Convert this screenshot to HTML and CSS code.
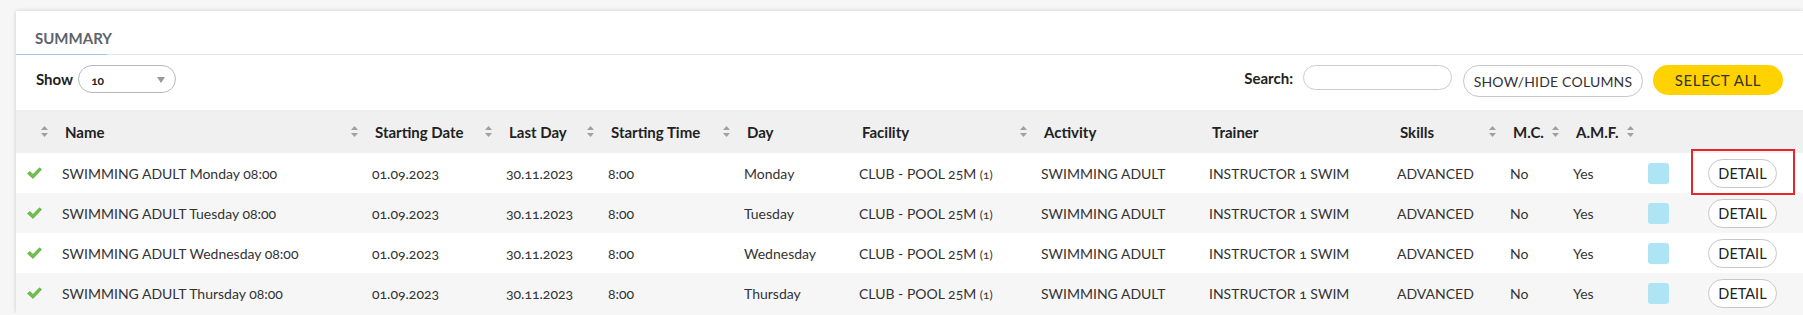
FILE: index.html
```html
<!DOCTYPE html>
<html lang="en">
<head>
    <meta charset="UTF-8">
    <meta name="viewport" content="width=device-width, initial-scale=1.0">
    <title>Summary</title>
    <link rel="stylesheet" href="styles.css">
</head>
<body>
    <div class="panel">
        <div class="tabs">
            <div class="tab active">SUMMARY</div>
        </div>

        <div class="toolbar">
            <label class="length">Show
                <span class="select">10
                    <svg class="caret" width="8" height="6" viewBox="0 0 8 6"><path d="M0 0h8L4 6z" fill="#999"/></svg>
                </span>
            </label>
            <div class="tools">
                <label class="search">Search: <input type="text"></label>
                <button class="btn btn-columns">SHOW/HIDE COLUMNS</button>
                <button class="btn btn-yellow">SELECT ALL</button>
            </div>
        </div>

        <table class="grid">
            <colgroup>
                <col style="width:40px">
                <col style="width:310px">
                <col style="width:134px">
                <col style="width:102px">
                <col style="width:136px">
                <col style="width:115px">
                <col style="width:182px">
                <col style="width:168px">
                <col style="width:188px">
                <col style="width:113px">
                <col style="width:63px">
                <col style="width:75px">
                <col style="width:49px">
                <col>
            </colgroup>
            <thead>
                <tr>
                    <th><span class="th-in"><span></span><svg class="sort" width="7" height="11" viewBox="0 0 7 11"><path d="M3.5 0L7 4H0zM3.5 11L0 7h7z" fill="#a0a0a0"/></svg></span></th>
                    <th><span class="th-in">Name<svg class="sort" width="7" height="11" viewBox="0 0 7 11"><path d="M3.5 0L7 4H0zM3.5 11L0 7h7z" fill="#a0a0a0"/></svg></span></th>
                    <th><span class="th-in">Starting Date<svg class="sort" width="7" height="11" viewBox="0 0 7 11"><path d="M3.5 0L7 4H0zM3.5 11L0 7h7z" fill="#a0a0a0"/></svg></span></th>
                    <th><span class="th-in">Last Day<svg class="sort" width="7" height="11" viewBox="0 0 7 11"><path d="M3.5 0L7 4H0zM3.5 11L0 7h7z" fill="#a0a0a0"/></svg></span></th>
                    <th><span class="th-in">Starting Time<svg class="sort" width="7" height="11" viewBox="0 0 7 11"><path d="M3.5 0L7 4H0zM3.5 11L0 7h7z" fill="#a0a0a0"/></svg></span></th>
                    <th><span class="th-in">Day</span></th>
                    <th><span class="th-in">Facility<svg class="sort" width="7" height="11" viewBox="0 0 7 11"><path d="M3.5 0L7 4H0zM3.5 11L0 7h7z" fill="#a0a0a0"/></svg></span></th>
                    <th><span class="th-in">Activity</span></th>
                    <th><span class="th-in">Trainer</span></th>
                    <th><span class="th-in">Skills<svg class="sort" width="7" height="11" viewBox="0 0 7 11"><path d="M3.5 0L7 4H0zM3.5 11L0 7h7z" fill="#a0a0a0"/></svg></span></th>
                    <th><span class="th-in">M.C.<svg class="sort" width="7" height="11" viewBox="0 0 7 11"><path d="M3.5 0L7 4H0zM3.5 11L0 7h7z" fill="#a0a0a0"/></svg></span></th>
                    <th><span class="th-in">A.M.F.<svg class="sort" width="7" height="11" viewBox="0 0 7 11"><path d="M3.5 0L7 4H0zM3.5 11L0 7h7z" fill="#a0a0a0"/></svg></span></th>
                    <th></th>
                    <th></th>
                </tr>
            </thead>
            <tbody>
                <tr>
                    <td class="check"><svg width="15" height="12" viewBox="0 0 15 12"><path d="M0.5 6.5L3 4.5L6 7.5L12.5 0.8L14.5 2.5L6 11.5z" fill="#6cc24a" stroke="#4a9e2c" stroke-width="0.6"/></svg></td>
                    <td>SWIMMING ADULT Monday 08:00</td>
                    <td>01.09.2023</td>
                    <td>30.11.2023</td>
                    <td>8:00</td>
                    <td>Monday</td>
                    <td>CLUB - POOL 25M <small>(1)</small></td>
                    <td>SWIMMING ADULT</td>
                    <td>INSTRUCTOR 1 SWIM</td>
                    <td>ADVANCED</td>
                    <td>No</td>
                    <td>Yes</td>
                    <td><span class="swatch"></span></td>
                    <td class="action"><span class="marked"><button class="btn-detail">DETAIL</button></span></td>
                </tr>
                <tr>
                    <td class="check"><svg width="15" height="12" viewBox="0 0 15 12"><path d="M0.5 6.5L3 4.5L6 7.5L12.5 0.8L14.5 2.5L6 11.5z" fill="#6cc24a" stroke="#4a9e2c" stroke-width="0.6"/></svg></td>
                    <td>SWIMMING ADULT Tuesday 08:00</td>
                    <td>01.09.2023</td>
                    <td>30.11.2023</td>
                    <td>8:00</td>
                    <td>Tuesday</td>
                    <td>CLUB - POOL 25M <small>(1)</small></td>
                    <td>SWIMMING ADULT</td>
                    <td>INSTRUCTOR 1 SWIM</td>
                    <td>ADVANCED</td>
                    <td>No</td>
                    <td>Yes</td>
                    <td><span class="swatch"></span></td>
                    <td class="action"><button class="btn-detail">DETAIL</button></td>
                </tr>
                <tr>
                    <td class="check"><svg width="15" height="12" viewBox="0 0 15 12"><path d="M0.5 6.5L3 4.5L6 7.5L12.5 0.8L14.5 2.5L6 11.5z" fill="#6cc24a" stroke="#4a9e2c" stroke-width="0.6"/></svg></td>
                    <td>SWIMMING ADULT Wednesday 08:00</td>
                    <td>01.09.2023</td>
                    <td>30.11.2023</td>
                    <td>8:00</td>
                    <td>Wednesday</td>
                    <td>CLUB - POOL 25M <small>(1)</small></td>
                    <td>SWIMMING ADULT</td>
                    <td>INSTRUCTOR 1 SWIM</td>
                    <td>ADVANCED</td>
                    <td>No</td>
                    <td>Yes</td>
                    <td><span class="swatch"></span></td>
                    <td class="action"><button class="btn-detail">DETAIL</button></td>
                </tr>
                <tr>
                    <td class="check"><svg width="15" height="12" viewBox="0 0 15 12"><path d="M0.5 6.5L3 4.5L6 7.5L12.5 0.8L14.5 2.5L6 11.5z" fill="#6cc24a" stroke="#4a9e2c" stroke-width="0.6"/></svg></td>
                    <td>SWIMMING ADULT Thursday 08:00</td>
                    <td>01.09.2023</td>
                    <td>30.11.2023</td>
                    <td>8:00</td>
                    <td>Thursday</td>
                    <td>CLUB - POOL 25M <small>(1)</small></td>
                    <td>SWIMMING ADULT</td>
                    <td>INSTRUCTOR 1 SWIM</td>
                    <td>ADVANCED</td>
                    <td>No</td>
                    <td>Yes</td>
                    <td><span class="swatch"></span></td>
                    <td class="action"><button class="btn-detail">DETAIL</button></td>
                </tr>
            </tbody>
        </table>
    </div>
</body>
</html>
```

FILE: styles.css
```css
*{
    margin: 0;
    padding: 0;
    box-sizing: border-box;
}
body{
    background-color: #f6f6f6;
    font-family: Lato, "Open Sans", sans-serif;
    color: #333;
    overflow: hidden;
}
.panel{
    margin: 11px 0 0 16px;
    background-color: #fff;
    box-shadow: 0 0 4px rgba(0, 0, 0, 0.18);
}
.tabs{
    height: 44px;
    border-bottom: 1px solid #e6e6e6;
}
.tab{
    width: 91px;
    height: 44px;
    padding: 18px 0 0 19px;
    line-height: 18px;
    font-size: 15px;
    font-weight: 700;
    color: #5d636b;
}
.tab.active{
    border-bottom: 1px solid #9cc6ea;
}

.toolbar{
    display: flex;
    justify-content: space-between;
    align-items: flex-start;
    height: 55px;
    padding: 10px 20px 0 20px;
}
.length{
    display: flex;
    align-items: center;
    gap: 5px;
    height: 28px;
    font-size: 15px;
    font-weight: 700;
    color: #222;
}
.select{
    display: flex;
    align-items: center;
    justify-content: space-between;
    width: 98px;
    height: 28px;
    padding: 2px 10px 0 12px;
    border: 1px solid #b8b8b8;
    border-radius: 14px;
    font-size: 12px;
    font-weight: 700;
    font-variant-numeric: oldstyle-nums;
}
.tools{
    display: flex;
    align-items: flex-start;
}
.search{
    display: flex;
    align-items: center;
    gap: 10px;
    height: 25px;
    margin-right: 11px;
    font-size: 15px;
    font-weight: 700;
    color: #222;
}
.search input{
    width: 149px;
    height: 25px;
    border: 1px solid #ccc;
    border-radius: 13px;
    outline: none;
}
.btn{
    height: 32px;
    padding: 0;
    border: 1px solid #c8c8c8;
    border-radius: 16px;
    background-color: #fff;
    font-family: Lato, sans-serif;
    font-size: 14px;
    color: #333;
    letter-spacing: 0.2px;
}
.btn-columns{
    width: 180px;
}
.btn-yellow{
    width: 130px;
    height: 30px;
    margin-left: 10px;
    border: none;
    background-color: #ffd200;
    font-size: 15px;
    letter-spacing: 0.6px;
}

.grid{
    width: 100%;
    border-collapse: collapse;
    table-layout: fixed;
}
.grid thead tr{
    background-color: #f0f0f0;
}
.grid th{
    height: 43px;
    padding: 0 8px 0 9px;
    text-align: left;
    font-size: 15px;
    font-weight: 700;
    color: #222;
    white-space: nowrap;
}
.th-in{
    display: flex;
    align-items: center;
    justify-content: space-between;
}
.sort{
    flex: none;
}
.grid td{
    height: 40px;
    padding: 0 6px;
    font-size: 14px;
    color: #333;
    white-space: nowrap;
    font-variant-numeric: oldstyle-nums;
}
.grid td small{
    font-size: 12px;
}
.grid tbody tr:nth-child(even){
    background-color: #f6f6f6;
}
.grid td.check{
    padding-left: 11px;
}
.grid td.check svg{
    display: block;
}
.swatch{
    display: block;
    width: 21px;
    height: 21px;
    border-radius: 3px;
    background-color: #aee4f4;
}
.grid td.action{
    padding-left: 17px;
}
.btn-detail{
    display: block;
    width: 69px;
    height: 29px;
    border: 1px solid #c8c8c8;
    border-radius: 15px;
    background-color: #fff;
    font-family: Lato, sans-serif;
    font-size: 14.5px;
    color: #222;
}
.marked{
    position: relative;
    display: block;
    width: 69px;
}
.marked::after{
    content: "";
    position: absolute;
    top: -10px;
    bottom: -7px;
    left: -17px;
    right: -18px;
    border: 2px solid #e5262b;
}
```
